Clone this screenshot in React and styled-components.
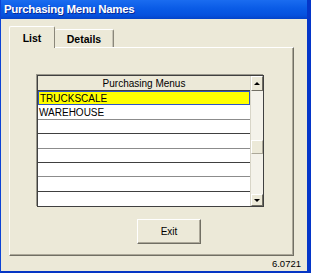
import React from 'react'
import styled, { createGlobalStyle } from 'styled-components'

const Global = createGlobalStyle`
  html, body {
    margin: 0;
    padding: 0;
    background: #ece9d8;
  }
  * { box-sizing: border-box; }
`

const Window = styled.div`
  width: 311px;
  height: 273px;
  display: flex;
  flex-direction: column;
  background: #ece9d8;
  border-left: 1px solid #0c43d6;
  border-right: 4px solid #0536c9;
  border-bottom: 2px solid #0636c4;
  font-family: "Liberation Sans", Arial, sans-serif;
  overflow: hidden;
`

const TitleBar = styled.div`
  height: 19px;
  flex: none;
  margin: 0 -4px 0 -1px;
  padding: 3px 0 0 4px;
  background: linear-gradient(#1a6cf0, #0a5be6 45%, #0651de 80%, #0443c8);
  color: #fff;
  font-weight: bold;
  font-size: 11.5px;
  letter-spacing: -0.3px;
  text-shadow: 1px 1px 0 #0b2a96;
  white-space: nowrap;
`

const Body = styled.div`
  flex: 1;
  display: flex;
  flex-direction: column;
  padding: 7px 0 0 8px;
`

const TabStrip = styled.div`
  display: flex;
  align-items: flex-end;
  height: 21px;
  position: relative;
  z-index: 1;
`

const Tab = styled.div`
  width: ${p => p.$w}px;
  height: ${p => (p.$active ? 22 : 18)}px;
  margin-bottom: ${p => (p.$active ? -1 : 0)}px;
  display: flex;
  align-items: center;
  justify-content: center;
  padding-top: ${p => (p.$active ? 0 : 1)}px;
  font-size: 10.5px;
  font-weight: bold;
  color: #000;
  background: #ece9d8;
  border-top: 1px solid #fff;
  border-left: ${p => (p.$first ? '1px solid #fff' : 'none')};
  border-right: 1px solid #8a877a;
  box-shadow: ${p => (p.$active ? 'none' : 'inset -1px 0 0 #c6c3b5')};
  border-top-left-radius: 2px;
  border-top-right-radius: 2px;
`

const Panel = styled.div`
  width: 285px;
  height: 209px;
  border-top: 1px solid #fff;
  border-left: 1px solid #fff;
  border-right: 1px solid #716f64;
  border-bottom: 1px solid #716f64;
  box-shadow: inset -1px -1px 0 #aca899;
  padding: 27px 0 0 27px;
  display: flex;
  flex-direction: column;
`

const Grid = styled.div`
  width: 227px;
  height: 132px;
  border: 1px solid #404040;
  box-shadow: -1px -1px 0 #9a988c;
  display: grid;
  grid-template-columns: 1fr 13px;
  background: #fff;
  font-size: 10px;
`

const Column = styled.div`
  display: flex;
  flex-direction: column;
  overflow: hidden;
`

const Header = styled.div`
  height: 15px;
  flex: none;
  display: flex;
  align-items: center;
  justify-content: center;
  background: #ece9d8;
  border-bottom: 1px solid #404040;
  color: #000;
`

const Row = styled.div`
  height: 14.4px;
  flex: none;
  display: flex;
  align-items: center;
  padding-left: 1px;
  color: #000;
  background: ${p => (p.$selected ? '#ffff00' : '#fff')};
  border: ${p => (p.$selected ? '1px solid #2f56c6' : 'none')};
  border-bottom: 1px solid ${p => (p.$selected ? '#2f56c6' : p.$alt ? '#8c8c8c' : '#404040')};
  &:last-child { border-bottom: none; }
`

const ScrollBar = styled.div`
  display: flex;
  flex-direction: column;
  background: #f4f2ea;
  border-left: 1px solid #d8d5c8;
`

const ScrollButton = styled.div`
  height: ${p => p.$h}px;
  flex: none;
  display: flex;
  align-items: center;
  justify-content: center;
  background: #ece9d8;
  border-top: 1px solid #fff;
  border-left: 1px solid #fff;
  border-right: 1px solid #716f64;
  border-bottom: 1px solid #716f64;
`

const Arrow = styled.div`
  width: 0;
  height: 0;
  border-left: 3px solid transparent;
  border-right: 3px solid transparent;
  ${p => (p.$down ? 'border-top: 3px solid #000;' : 'border-bottom: 3px solid #000;')}
`

const Track = styled.div`
  flex: 1;
  padding-top: 49px;
`

const Thumb = styled.div`
  height: 14px;
  background: #ece9d8;
  border-top: 1px solid #fff;
  border-left: 1px solid #fff;
  border-right: 1px solid #aca899;
  border-bottom: 1px solid #aca899;
`

const ButtonRow = styled.div`
  padding: 12px 0 0 100px;
`

const Button = styled.div`
  width: 64px;
  height: 25px;
  display: flex;
  align-items: center;
  justify-content: center;
  font-size: 10px;
  color: #000;
  background: #ece9d8;
  border-top: 1px solid #fff;
  border-left: 1px solid #fff;
  border-right: 1px solid #716f64;
  border-bottom: 1px solid #716f64;
  box-shadow: inset -1px -1px 0 #aca899;
`

const Footer = styled.div`
  flex: 1;
  display: flex;
  justify-content: flex-end;
  align-items: center;
  padding-right: 6px;
  font-size: 9.5px;
  color: #000;
`

const items = ['TRUCKSCALE', 'WAREHOUSE', '', '', '', '', '', '']

export default function App() {
  return (
    <>
      <Global />
      <Window>
        <TitleBar>Purchasing Menu Names</TitleBar>
        <Body>
          <TabStrip>
            <Tab $active $first $w={46}>List</Tab>
            <Tab $w={59}>Details</Tab>
          </TabStrip>
          <Panel>
            <Grid>
              <Column>
                <Header>Purchasing Menus</Header>
                {items.map((t, i) => (
                  <Row key={i} $selected={i === 0} $alt={i % 2 === 1}>{t}</Row>
                ))}
              </Column>
              <ScrollBar>
                <ScrollButton $h={15}><Arrow /></ScrollButton>
                <Track><Thumb /></Track>
                <ScrollButton $h={12}><Arrow $down /></ScrollButton>
              </ScrollBar>
            </Grid>
            <ButtonRow>
              <Button>Exit</Button>
            </ButtonRow>
          </Panel>
        </Body>
        <Footer>6.0721</Footer>
      </Window>
    </>
  )
}
